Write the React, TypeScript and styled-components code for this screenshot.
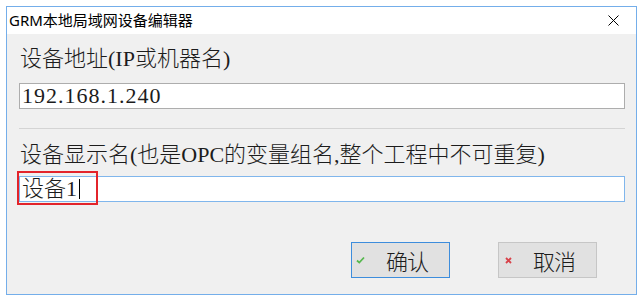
import React from "react";
import styled, { createGlobalStyle } from "styled-components";

const GlobalStyle = createGlobalStyle`
  html, body {
    margin: 0;
    padding: 0;
    background: #ffffff;
  }
`;

const Page = styled.div`
  padding: 6px 6px 2px 6px;
`;

const Window = styled.div`
  width: 631px;
  height: 289px;
  box-sizing: border-box;
  border: 1px solid #74aeea;
  display: flex;
  flex-direction: column;
  background: #f0f0f0;
`;

const TitleBar = styled.div`
  height: 27px;
  background: #ffffff;
  display: flex;
  align-items: center;
  justify-content: space-between;
  padding: 0 17px 0 2px;
  font-family: "Noto Sans", "Noto Sans CJK SC", sans-serif;
  font-size: 15px;
  color: #000000;
`;

const Title = styled.span`
  line-height: 27px;
`;

const Body = styled.div`
  flex: 1;
  display: flex;
  flex-direction: column;
  padding: 12px 11px 16px 12px;
  font-family: "Liberation Serif", "Noto Sans CJK SC", serif;
  font-size: 22px;
  font-weight: 300;
  color: #1c1c1c;
`;

const Label = styled.div<{ $gap: number }>`
  height: 26px;
  line-height: 26px;
  margin-top: ${(p) => p.$gap}px;
  padding-left: 1px;
  white-space: nowrap;
`;

const Field = styled.div<{ $focused?: boolean; $gap: number; $spacing?: number }>`
  position: relative;
  box-sizing: border-box;
  height: 26px;
  margin-top: ${(p) => p.$gap}px;
  border: 1px solid ${(p) => (p.$focused ? "#80b6ec" : "#adadad")};
  background: #ffffff;
  display: flex;
  align-items: center;
  padding-left: 2px;
  line-height: 24px;
  letter-spacing: ${(p) => p.$spacing ?? 0}px;
  white-space: nowrap;
`;

const Caret = styled.span`
  display: inline-block;
  width: 1px;
  height: 20px;
  margin-left: 2px;
  background: #000000;
`;

const Highlight = styled.div`
  position: absolute;
  left: -3px;
  top: -6px;
  width: 81px;
  height: 34px;
  box-sizing: border-box;
  border: 2px solid #e3242b;
  pointer-events: none;
`;

const Divider = styled.div`
  height: 1px;
  margin-top: 19px;
  background: #d4d4d4;
`;

const ButtonRow = styled.div`
  margin-top: auto;
  display: flex;
  justify-content: flex-end;
  gap: 48px;
  padding-right: 28px;
`;

const Button = styled.button<{ $primary?: boolean }>`
  width: 99px;
  height: 36px;
  box-sizing: border-box;
  border: 1px solid ${(p) => (p.$primary ? "#3d8ddc" : "#c6c6c6")};
  background: #e1e1e1;
  display: flex;
  align-items: center;
  padding: 0 0 0 4px;
  font-family: "Liberation Serif", "Noto Sans CJK SC", serif;
  font-size: 22px;
  font-weight: 300;
  color: #1c1c1c;
  cursor: pointer;
`;

const ButtonText = styled.span`
  flex: 1;
  text-align: center;
  letter-spacing: -1px;
`;

function CloseIcon() {
  return (
    <svg width="11" height="11" viewBox="0 0 11 11">
      <path d="M0.5 0.5 L10.5 10.5 M10.5 0.5 L0.5 10.5" stroke="#000" strokeWidth="1" fill="none" />
    </svg>
  );
}

function CheckIcon() {
  return (
    <svg width="9" height="8" viewBox="0 0 9 8">
      <path d="M1 4.5 L3.3 6.6 L8 1.5" stroke="#56b84e" strokeWidth="1.8" fill="none" />
    </svg>
  );
}

function CrossIcon() {
  return (
    <svg width="7" height="7" viewBox="0 0 7 7" style={{ marginLeft: 2 }}>
      <path d="M1 1 L6 6 M6 1 L1 6" stroke="#d8424a" strokeWidth="1.9" fill="none" />
    </svg>
  );
}

export default function App() {
  return (
    <Page>
      <GlobalStyle />
      <Window>
        <TitleBar>
          <Title>GRM本地局域网设备编辑器</Title>
          <CloseIcon />
        </TitleBar>
        <Body>
          <Label $gap={0}>设备地址(IP或机器名)</Label>
          <Field $gap={11} $spacing={1}>192.168.1.240</Field>
          <Divider />
          <Label $gap={13}>设备显示名(也是OPC的变量组名,整个工程中不可重复)</Label>
          <Field $gap={8} $focused>
            设备1
            <Caret />
            <Highlight />
          </Field>
          <ButtonRow>
            <Button $primary>
              <CheckIcon />
              <ButtonText>确认</ButtonText>
            </Button>
            <Button>
              <CrossIcon />
              <ButtonText>取消</ButtonText>
            </Button>
          </ButtonRow>
        </Body>
      </Window>
    </Page>
  );
}
